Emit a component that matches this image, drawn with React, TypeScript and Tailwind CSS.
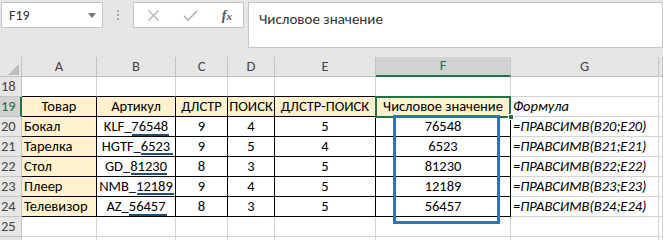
const rows = [
  { n: 20, a: "Бокал", b: "KLF_76548", c: "9", d: "4", e: "5", f: "76548", g: "=ПРАВСИМВ(B20;E20)" },
  { n: 21, a: "Тарелка", b: "HGTF_6523", c: "9", d: "5", e: "4", f: "6523", g: "=ПРАВСИМВ(B21;E21)" },
  { n: 22, a: "Стол", b: "GD_81230", c: "8", d: "3", e: "5", f: "81230", g: "=ПРАВСИМВ(B22;E22)" },
  { n: 23, a: "Плеер", b: "NMB_12189", c: "9", d: "4", e: "5", f: "12189", g: "=ПРАВСИМВ(B23;E23)" },
  { n: 24, a: "Телевизор", b: "AZ_56457", c: "8", d: "3", e: "5", f: "56457", g: "=ПРАВСИМВ(B24;E24)" },
];

// hand-drawn underlines under the number part of B20:B24
const marks = [
  { left: 132, top: 77, w: 37 },
  { left: 141, top: 96, w: 32 },
  { left: 131, top: 116, w: 36 },
  { left: 137, top: 136, w: 37 },
  { left: 129, top: 157, w: 38 },
];

const cols = "grid-cols-[22px_75px_79px_52px_47px_101px_135px_148px_1fr]";
const cell = "h-[20px] border-r border-b border-[#d4d4d4] flex items-center whitespace-nowrap overflow-hidden";
const head = "h-[20px] border-r border-b border-[#c4c4c4] bg-[#e6e6e6] flex items-center justify-center text-[#444]";

export default function App() {
  return (
    <div className="w-[663px] h-[240px] overflow-hidden bg-white text-[14.5px] text-black" style={{ fontFamily: "Carlito, 'Noto Sans', sans-serif" }}>
      {/* formula bar */}
      <div className="h-[57px] bg-[#e6e6e6] flex items-start pt-[2px] pl-[1px]">
        <div className="w-[102px] h-[26px] bg-white border border-[#c6c6c6] flex items-center justify-between pl-[7px] pr-[6px] text-[#333] text-[14px]">
          <span>F19</span>
          <span className="w-0 h-0 border-l-[4px] border-r-[4px] border-t-[5px] border-l-transparent border-r-transparent border-t-[#777]" />
        </div>
        <div className="w-[30px] h-[26px] flex flex-col items-center justify-center gap-[2px]">
          <span className="w-[2px] h-[2px] bg-[#aaa]" />
          <span className="w-[2px] h-[2px] bg-[#aaa]" />
          <span className="w-[2px] h-[2px] bg-[#aaa]" />
        </div>
        <div className="w-[111px] h-[26px] bg-white border border-[#c6c6c6] flex items-center justify-between pl-[13px] pr-[11px]">
          <svg width="13" height="13" viewBox="0 0 13 13" className="text-[#b4b4b4]">
            <path d="M1.5 1.5 L11.5 11.5 M11.5 1.5 L1.5 11.5" stroke="currentColor" strokeWidth="1.3" fill="none" />
          </svg>
          <svg width="15" height="13" viewBox="0 0 15 13" className="text-[#b4b4b4]">
            <path d="M1 7 L5 11 L14 2" stroke="currentColor" strokeWidth="1.6" fill="none" />
          </svg>
          <span className="text-[#555] text-[14px] italic font-bold" style={{ fontFamily: "'Liberation Serif', serif" }}>
            f<span className="text-[11px]">x</span>
          </span>
        </div>
        <div className="ml-[4px] flex-1 h-[46px] bg-white border border-[#c6c6c6] pl-[10px] pt-[5px] text-[#333] text-[15px]">
          Числовое значение
        </div>
      </div>

      {/* sheet */}
      <div className="relative">
        <div className={`grid ${cols}`}>
          <div className={`${head} border-[#c4c4c4]`}>
            <svg width="11" height="11" viewBox="0 0 11 11" className="ml-[6px] mt-[6px]">
              <path d="M11 0 L11 11 L0 11 Z" fill="#bcbcbc" />
            </svg>
          </div>
          {["A", "B", "C", "D", "E"].map((c) => (
            <div key={c} className={head}>{c}</div>
          ))}
          <div className={`${head} !bg-[#d2d2d2] !text-[#217346] border-b-2 !border-b-[#217346]`}>F</div>
          <div className={head}>G</div>
          <div className={head} />

          {/* row 18 */}
          <div className={`${head} justify-start pl-[1px]`}>18</div>
          {[0, 1, 2, 3, 4].map((i) => (
            <div key={i} className={`${cell} !border-b-black`} />
          ))}
          <div className={`${cell} !border-b-black`} />
          <div className={cell} />
          <div className={cell} />

          {/* row 19 */}
          <div className={`${head} justify-start pl-[1px] !bg-[#d2d2d2] !text-[#217346] border-r-2 !border-r-[#217346]`}>19</div>
          {["Товар", "Артикул", "ДЛСТР", "ПОИСК", "ДЛСТР-ПОИСК"].map((t) => (
            <div key={t} className={`${cell} justify-center bg-[#fff2cc] !border-black`}>{t}</div>
          ))}
          <div className={`${cell} justify-center bg-[#fff2cc] !border-black`}>Числовое значение</div>
          <div className={`${cell} italic pl-[2px]`}>Формула</div>
          <div className={cell} />

          {rows.map((r) => (
            <>
              <div key={`n${r.n}`} className={`${head} justify-start pl-[1px]`}>{r.n}</div>
              <div className={`${cell} bg-[#fff2cc] !border-black pl-[2px]`}>{r.a}</div>
              <div className={`${cell} justify-center !border-black`}>{r.b}</div>
              <div className={`${cell} justify-center !border-black`}>{r.c}</div>
              <div className={`${cell} justify-center !border-black`}>{r.d}</div>
              <div className={`${cell} justify-center !border-black`}>{r.e}</div>
              <div className={`${cell} justify-center !border-black`}>{r.f}</div>
              <div className={`${cell} italic pl-[2px] overflow-visible`}>{r.g}</div>
              <div className={cell} />
            </>
          ))}

          <div className={`${head} justify-start pl-[1px]`}>25</div>
          {[0, 1, 2, 3, 4, 5, 6, 7].map((i) => (
            <div key={i} className={cell} />
          ))}
          <div className={head} />
          {[0, 1, 2, 3, 4, 5, 6, 7].map((i) => (
            <div key={i} className={cell} />
          ))}
        </div>

        {/* selection of F19 */}
        <div className="absolute left-[375px] top-[39px] w-[136px] h-[22px] border-2 border-[#217346]" />
        <div className="absolute left-[508px] top-[57px] w-[6px] h-[6px] bg-[#217346] border border-white" />

        {/* blue frame drawn over F20:F24 */}
        <div className="absolute left-[393px] top-[58px] w-[107px] h-[109px] border-[3px] border-[#2e75b6]" />

        {marks.map((m, i) => (
          <div key={i} className="absolute h-[2px] bg-[#1f4e79]" style={{ left: m.left, top: m.top, width: m.w }} />
        ))}
      </div>
    </div>
  );
}
